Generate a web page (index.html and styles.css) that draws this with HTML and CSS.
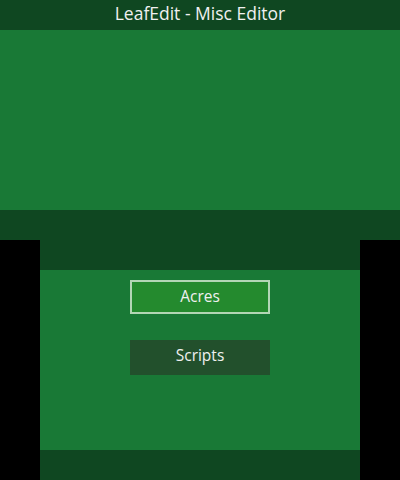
FILE: index.html
```html
<!DOCTYPE html>
<html>
<head>
<meta charset="utf-8">
<link rel="stylesheet" href="styles.css">
</head>
<body>
<div class="top">
  <div class="bar title">LeafEdit - Misc Editor</div>
  <div class="body"></div>
  <div class="bar"></div>
</div>
<div class="bottom">
  <div class="bar"></div>
  <div class="body menu">
    <div class="btn selected">Acres</div>
    <div class="btn">Scripts</div>
  </div>
  <div class="bar"></div>
</div>
</body>
</html>
```
FILE: styles.css
```css
html, body {
  margin: 0;
  padding: 0;
  background: #000;
  width: 400px;
  height: 480px;
  overflow: hidden;
  font-family: "Open Sans", "Noto Sans", sans-serif;
  color: #f0f0f0;
}
.top {
  width: 400px;
  height: 240px;
  display: flex;
  flex-direction: column;
}
.bottom {
  width: 320px;
  height: 240px;
  margin: 0 auto;
  display: flex;
  flex-direction: column;
}
.bar {
  height: 30px;
  background: #0f4721;
  flex: none;
}
.title {
  font-size: 17.5px;
  line-height: 26px;
  text-align: center;
}
.body {
  flex: 1;
  background: #197936;
}
.menu {
  display: flex;
  flex-direction: column;
  align-items: center;
  padding-top: 10px;
  gap: 26px;
}
.btn {
  width: 140px;
  height: 35px;
  box-sizing: border-box;
  background: #22502c;
  font-size: 15.5px;
  line-height: 31px;
  text-align: center;
}
.btn.selected {
  height: 34px;
  background: #248a2e;
  border: 2px solid #b3d6b5;
  line-height: 28px;
}
```
